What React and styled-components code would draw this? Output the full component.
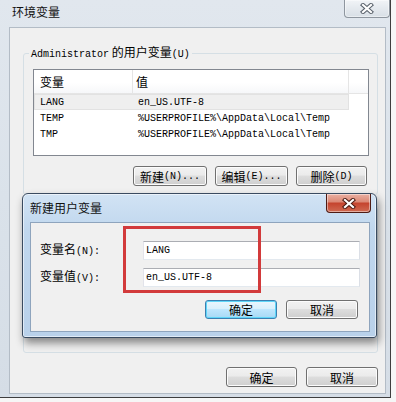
import React from 'react'
import styled, { createGlobalStyle } from 'styled-components'

const cjk = `"Noto Sans CJK SC", "Liberation Sans", sans-serif`
const mono = `"Liberation Mono", "Noto Sans CJK SC", monospace`

const GlobalStyle = createGlobalStyle`
  html, body {
    margin: 0;
    background: #f6f6f6;
  }
  body {
    font-family: ${cjk};
    font-size: 12px;
    color: #000;
  }
  * {
    box-sizing: border-box;
  }
`

// ascii parts in the SimSun look: half width glyphs
const A = styled.span`
  font-family: ${mono};
  font-size: 10px;
`

const Window = styled.div`
  position: relative;
  width: 391px;
  height: 398px;
  display: flex;
  flex-direction: column;
  padding: 0 4px 3px 9px;
  background: linear-gradient(180deg, #e1e7ee 0%, #dae2ea 50%, #d5dde6 100%);
  border-right: 1px solid #3e3e3e;
  border-bottom: 1px solid #3e3e3e;
`

const TitleBar = styled.div`
  flex-shrink: 0;
  height: ${p => p.$h}px;
  display: flex;
  align-items: flex-start;
`

const Title = styled.div`
  margin: ${p => p.$top}px 0 0 ${p => p.$left}px;
  font-size: 12px;
  line-height: 16px;
  color: #111;
`

const CloseButton = styled.div`
  margin-left: auto;
  margin-right: ${p => p.$edge}px;
  width: ${p => p.$w}px;
  height: ${p => p.$h}px;
  display: flex;
  align-items: center;
  justify-content: center;
  border: 1px solid ${p => (p.$active ? '#4e1b14' : '#8e969f')};
  border-top: none;
  border-radius: 0 0 4px 4px;
  background: ${p =>
    p.$active
      ? 'linear-gradient(180deg, #eab0a3 0%, #dc8a77 42%, #c5452f 52%, #cf6a52 100%)'
      : 'linear-gradient(180deg, #f1f4f7 0%, #e4e9ee 50%, #d8dfe6 100%)'};
  box-shadow: inset 0 0 0 1px rgba(255, 255, 255, 0.45);
`

const XIcon = ({ active }) => (
  <svg width="14" height="11" viewBox="0 0 14 11">
    <path
      d="M3 2 L11 9 M11 2 L3 9"
      stroke={active ? '#4b1a12' : '#59616b'}
      strokeWidth="4.2"
      strokeLinecap="square"
      fill="none"
    />
    <path d="M3 2 L11 9 M11 2 L3 9" stroke="#fff" strokeWidth="2.2" strokeLinecap="square" fill="none" />
  </svg>
)

const Client = styled.div`
  flex: 1;
  display: flex;
  flex-direction: column;
  background: #f0f0f0;
  border: 1px solid #b3bcc6;
  padding: 17px 7px 0 13px;
`

const Group = styled.fieldset`
  margin: ${p => p.$mt || 0}px 0 0;
  padding: 7px 8px 8px 9px;
  min-width: 0;
  border: 1px solid #d5dfe5;
  border-radius: 3px;
`

const Legend = styled.legend`
  margin-left: -4px;
  padding: 0 2px;
  font-size: 12px;
  line-height: 14px;
`

const ListBox = styled.div`
  height: 87px;
  border: 1px solid #828790;
  background: #fff;
  overflow: hidden;
`

const ListHeader = styled.div`
  display: flex;
  height: 24px;
  border-bottom: 1px solid #e5e5e5;
  background: linear-gradient(180deg, #ffffff 0%, #ffffff 55%, #f6f7f9 100%);
`

const HeadCell = styled.div`
  flex: ${p => (p.$w ? `0 0 ${p.$w}px` : 1)};
  display: flex;
  align-items: center;
  padding-left: ${p => p.$pad || 0}px;
  border-right: ${p => (p.$w ? '1px solid #e5e5e5' : 'none')};
  font-size: 12px;
`

const Row = styled.div`
  display: flex;
  width: 315px;
  height: 16px;
  align-items: center;
  background: ${p => (p.$selected ? '#efefef' : 'transparent')};
  box-shadow: ${p => (p.$selected ? 'inset 0 0 0 1px #e2e2e2' : 'none')};
`

const Cell = styled.div`
  flex: 0 0 ${p => p.$w}px;
  padding-left: ${p => p.$pad}px;
  font-family: ${mono};
  font-size: 10px;
  white-space: nowrap;
  overflow: hidden;
`

const ButtonRow = styled.div`
  display: flex;
  justify-content: flex-end;
  gap: ${p => p.$gap}px;
  margin-top: ${p => p.$mt}px;
  margin-right: ${p => p.$mr || 0}px;
`

const Button = styled.button`
  width: ${p => p.$w}px;
  height: ${p => p.$h || 20}px;
  padding: 0;
  display: flex;
  align-items: center;
  justify-content: center;
  font-family: ${cjk};
  font-size: 12px;
  color: #000;
  border: 1px solid ${p => (p.$default ? '#3c7fb1' : '#707070')};
  border-radius: 3px;
  background: ${p =>
    p.$default
      ? 'linear-gradient(180deg, #eaf6fd 0%, #d9f0fc 45%, #bee6fd 50%, #a7d9f5 100%)'
      : 'linear-gradient(180deg, #f2f2f2 0%, #ebebeb 45%, #dddddd 50%, #cfcfcf 100%)'};
  box-shadow: inset 0 0 0 1px ${p => (p.$default ? '#5fd6f8' : '#fcfcfc')};
`

// system variables group sits under the dialog, only its bottom edge shows
const SysArea = styled.div`
  height: 129px;
`

const Dialog = styled.div`
  position: absolute;
  left: 22px;
  top: 193px;
  width: 355px;
  height: 145px;
  display: flex;
  flex-direction: column;
  padding: 0 6px 5px 7px;
  border: 1px solid #3a4b60;
  border-radius: 6px 6px 3px 3px;
  background: linear-gradient(180deg, #d2e3f4 0%, #c0d7ee 25%, #b9d1ea 100%);
  box-shadow: 2px 5px 9px rgba(0, 0, 0, 0.45), inset 0 0 0 1px rgba(255, 255, 255, 0.55);
`

const DialogClient = styled.div`
  flex: 1;
  background: #f0f0f0;
  border: 1px solid #8ea4bd;
  padding: 18px 9px 0 9px;
`

const Fields = styled.div`
  display: grid;
  grid-template-columns: 103px 217px;
  row-gap: 8px;
  align-items: center;
`

const Label = styled.label`
  font-size: 12px;
  line-height: 14px;
`

const Input = styled.input`
  height: 19px;
  margin: 0;
  padding: 0 2px;
  font-family: ${mono};
  font-size: 10px;
  color: #000;
  background: #fff;
  border: 1px solid;
  border-color: #abadb3 #dbdfe6 #e3e9ef #e2e3ea;
  outline: none;
`

// red marker drawn over the screenshot
const Highlight = styled.div`
  position: absolute;
  left: 123px;
  top: 226px;
  width: 138px;
  height: 67px;
  border: 3px solid #d23a3b;
`

const userVars = [
  { name: 'LANG', value: 'en_US.UTF-8', selected: true },
  { name: 'TEMP', value: '%USERPROFILE%\\AppData\\Local\\Temp' },
  { name: 'TMP', value: '%USERPROFILE%\\AppData\\Local\\Temp' },
]

const App = () => {
  return (
    <>
      <GlobalStyle />
      <Window>
        <TitleBar $h={27}>
          <Title $top={4} $left={3}>环境变量</Title>
          <CloseButton $w={46} $h={18} $edge={-4}>
            <XIcon />
          </CloseButton>
        </TitleBar>
        <Client>
          <Group>
            <Legend>
              <A>Administrator</A> 的用户变量<A>(U)</A>
            </Legend>
            <ListBox>
              <ListHeader>
                <HeadCell $w={99} $pad={6}>变量</HeadCell>
                <HeadCell $w={216} $pad={3}>值</HeadCell>
                <HeadCell />
              </ListHeader>
              {userVars.map(v => (
                <Row key={v.name} $selected={v.selected}>
                  <Cell $w={99} $pad={6}>{v.name}</Cell>
                  <Cell $w={216} $pad={5}>{v.value}</Cell>
                </Row>
              ))}
            </ListBox>
            <ButtonRow $gap={8} $mt={10} $mr={2}>
              <Button $w={74}>新建<A>(N)...</A></Button>
              <Button $w={73}>编辑<A>(E)...</A></Button>
              <Button $w={71}>删除<A>(D)</A></Button>
            </ButtonRow>
          </Group>
          <Group $mt={12}>
            <SysArea />
          </Group>
          <ButtonRow $gap={9} $mt={14}>
            <Button $w={71}>确定</Button>
            <Button $w={72}>取消</Button>
          </ButtonRow>
        </Client>

        <Dialog>
          <TitleBar $h={28}>
            <Title $top={6} $left={0}>新建用户变量</Title>
            <CloseButton $active $w={45} $h={19} $edge={-1}>
              <XIcon active />
            </CloseButton>
          </TitleBar>
          <DialogClient>
            <Fields>
              <Label>变量名<A>(N):</A></Label>
              <Input readOnly value="LANG" />
              <Label>变量值<A>(V):</A></Label>
              <Input readOnly value="en_US.UTF-8" />
            </Fields>
            <ButtonRow $gap={9} $mt={13} $mr={2}>
              <Button $w={72} $h={19} $default>确定</Button>
              <Button $w={72} $h={19}>取消</Button>
            </ButtonRow>
          </DialogClient>
        </Dialog>
        <Highlight />
      </Window>
    </>
  )
}

export default App
